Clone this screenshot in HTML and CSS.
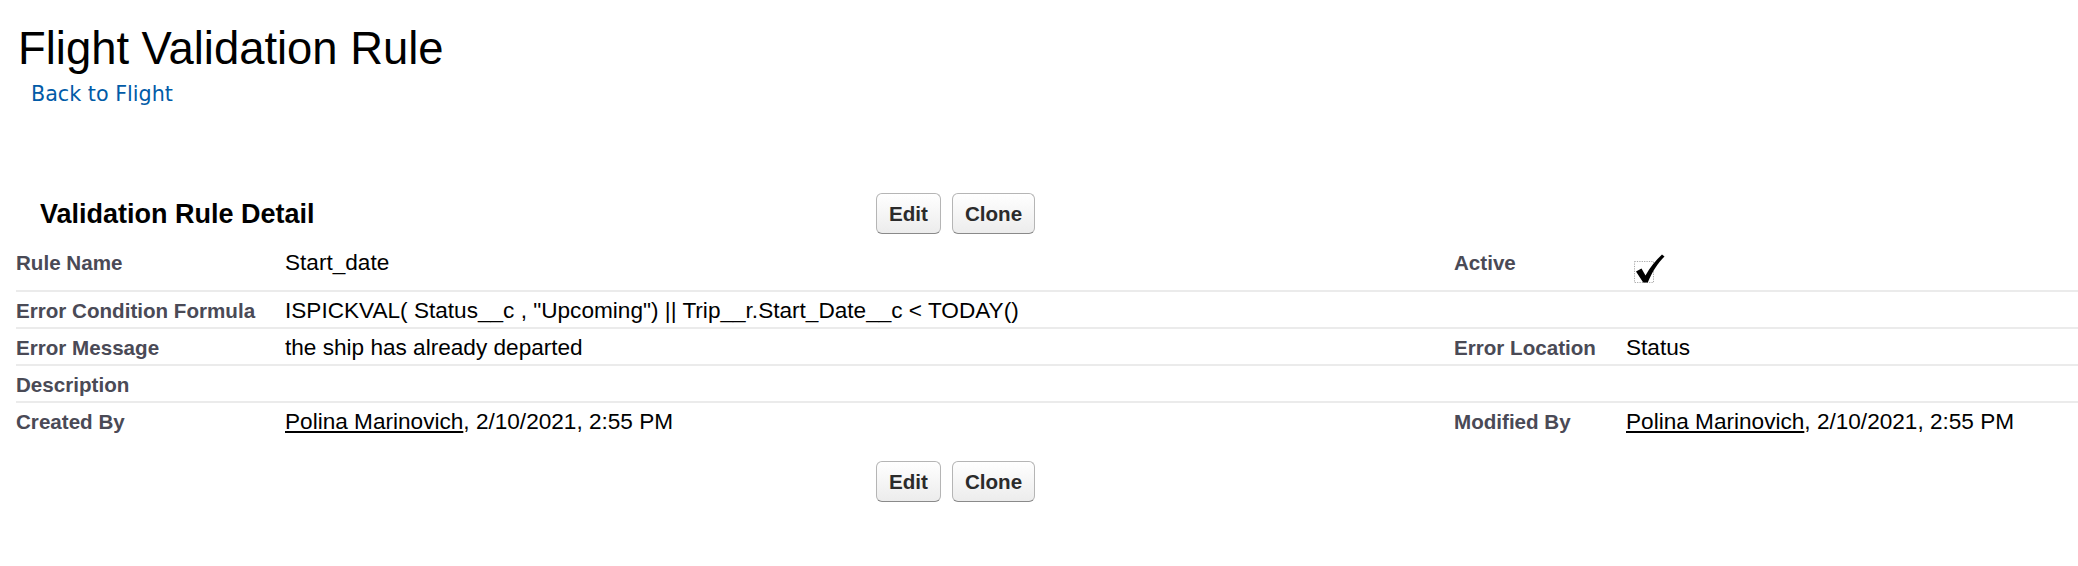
FILE: index.html
```html
<!DOCTYPE html>
<html>
<head>
<meta charset="utf-8">
<title>Flight Validation Rule</title>
<link rel="stylesheet" href="styles.css">
</head>
<body>
<div class="page">
  <h1 class="page-title">Flight Validation Rule</h1>
  <a class="back-link" href="#">Back to Flight</a>

  <section class="detail">
    <div class="detail-header">
      <div class="detail-title-cell"><h2 class="detail-title">Validation Rule Detail</h2></div>
      <div class="buttons">
        <button class="btn" type="button">Edit</button>
        <button class="btn" type="button">Clone</button>
      </div>
    </div>

    <table class="detail-list">
      <colgroup>
        <col class="col-label1">
        <col class="col-data1">
        <col class="col-label2">
        <col class="col-data2">
      </colgroup>
      <tbody>
        <tr class="row-first">
          <td class="label">Rule Name</td>
          <td class="data">Start_date</td>
          <td class="label">Active</td>
          <td class="data">
            <svg class="checkbox" width="44" height="37" viewBox="0 0 44 37" aria-label="Checked">
              <rect x="8.5" y="11.5" width="19" height="21" fill="none" stroke="#a8a8a8" stroke-width="1" stroke-dasharray="1.2 1.2"/>
              <path d="M10 21.5 L15.5 18.5 L19.5 25.5 C24 17 30 10 36 4.5 L38.5 6.5 C32 13 26 22 21.8 32.5 L17.2 32.5 Z" fill="#000"/>
            </svg>
          </td>
        </tr>
        <tr>
          <td class="label">Error Condition Formula</td>
          <td class="data">ISPICKVAL( Status__c , "Upcoming") || Trip__r.Start_Date__c &lt; TODAY()</td>
          <td class="label"></td>
          <td class="data"></td>
        </tr>
        <tr>
          <td class="label">Error Message</td>
          <td class="data">the ship has already departed</td>
          <td class="label">Error Location</td>
          <td class="data">Status</td>
        </tr>
        <tr>
          <td class="label">Description</td>
          <td class="data"></td>
          <td class="label"></td>
          <td class="data"></td>
        </tr>
        <tr class="row-last">
          <td class="label">Created By</td>
          <td class="data"><a class="user-link" href="#">Polina Marinovich</a>, 2/10/2021, 2:55 PM</td>
          <td class="label">Modified By</td>
          <td class="data"><a class="user-link" href="#">Polina Marinovich</a>, 2/10/2021, 2:55 PM</td>
        </tr>
      </tbody>
    </table>

    <div class="detail-footer">
      <div class="detail-title-cell"></div>
      <div class="buttons">
        <button class="btn" type="button">Edit</button>
        <button class="btn" type="button">Clone</button>
      </div>
    </div>
  </section>
</div>
</body>
</html>
```

FILE: styles.css
```css
html, body {
  margin: 0;
  padding: 0;
  background: #ffffff;
}

body {
  font-family: "Liberation Sans", Arial, sans-serif;
  color: #000000;
}

.page {
  padding-left: 16px;
}

.page-title {
  margin: 0 0 0 2px;
  padding-top: 23px;
  font-size: 45.4px;
  line-height: 52px;
  font-weight: normal;
  color: #000000;
}

.back-link {
  display: block;
  width: max-content;
  margin: 7px 0 0 15px;
  font-family: "DejaVu Sans", Verdana, sans-serif;
  font-size: 20.7px;
  line-height: 24px;
  color: #015ba7;
  text-decoration: none;
}

.detail-header {
  display: flex;
  align-items: center;
  margin-top: 87px;
}

.detail-footer {
  display: flex;
  align-items: center;
  margin-top: 23px;
}

.detail-title-cell {
  flex: 0 0 860px;
  box-sizing: border-box;
  padding-left: 24px;
}

.detail-title {
  margin: 0;
  font-size: 27px;
  line-height: 32px;
  font-weight: bold;
  color: #000000;
}

.buttons {
  display: flex;
  gap: 11px;
}

.btn {
  box-sizing: border-box;
  height: 41px;
  padding: 0 12px;
  font-family: "Liberation Sans", Arial, sans-serif;
  font-size: 20.6px;
  font-weight: bold;
  color: #2b2b2b;
  background: linear-gradient(#ffffff, #ececec);
  border: 1px solid #b5b5b5;
  border-bottom-color: #8a8a8a;
  border-radius: 6px;
  cursor: pointer;
}

.detail-list {
  margin-top: 10px;
  width: 100%;
  border-collapse: collapse;
  table-layout: fixed;
}

.col-label1 { width: 269px; }
.col-data1 { width: 1169px; }
.col-label2 { width: 172px; }

.detail-list tr {
  border-bottom: 2px solid #ebebeb;
}

.detail-list tr.row-last {
  border-bottom: none;
}

.detail-list td {
  padding: 6px 0 3px 0;
  vertical-align: top;
  line-height: 26px;
  white-space: nowrap;
}

.label {
  font-size: 20.6px;
  font-weight: bold;
  color: #4a4a56;
}

.data {
  font-size: 22.6px;
  color: #000000;
}

.checkbox {
  display: block;
}

.user-link {
  color: #000000;
  text-decoration: underline;
}
```
